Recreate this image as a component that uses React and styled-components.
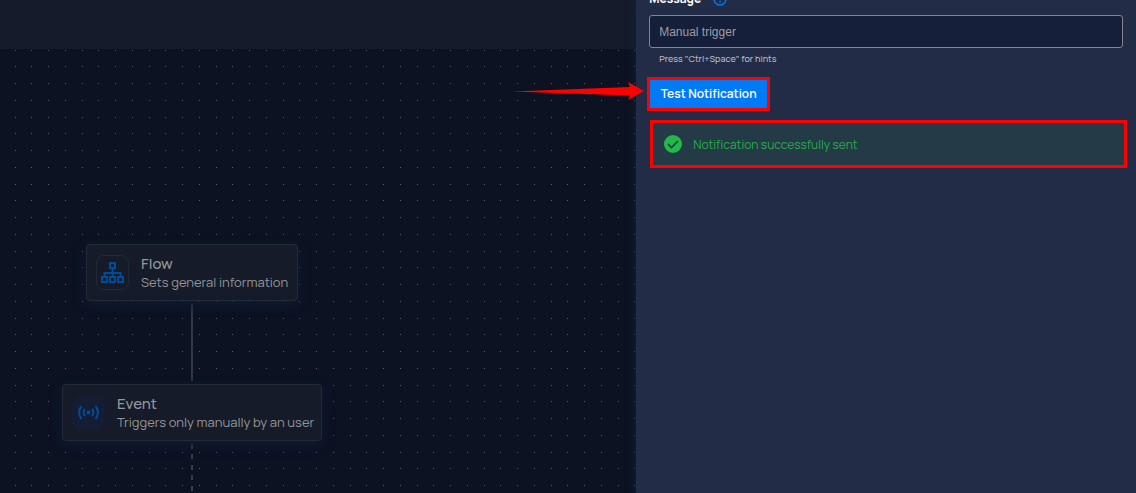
import React from 'react';
import styled, { createGlobalStyle } from 'styled-components';

const Global = createGlobalStyle`
  * { box-sizing: border-box; }
  body { margin: 0; background: #0c1222; font-family: Manrope, Inter, "Liberation Sans", sans-serif; }
`;

const Screen = styled.div`
  display: grid;
  grid-template-columns: minmax(0, 1fr) 44%;
  min-height: 100vh;
  overflow: hidden;
`;

const Workspace = styled.main`
  display: flex;
  flex-direction: column;
  min-width: 0;
`;

const TopBar = styled.header`
  height: 49px;
  background: #151b2a;
`;

const Canvas = styled.section`
  position: relative;
  flex: 1;
  overflow: hidden;
`;

const Layer = styled.svg`
  position: absolute;
  inset: 0;
  width: 100%;
  height: 100%;
`;

const Node = styled.article`
  position: absolute;
  left: ${(p) => p.$x}px;
  top: ${(p) => p.$y}px;
  width: ${(p) => p.$width}px;
  height: 57px;
  padding: 0 9px;
  display: flex;
  align-items: center;
  gap: 12px;
  background: #151b29;
  border: 1px solid #242a38;
  border-radius: 4px;
  box-shadow: 0 4px 12px #0e1c34;
`;

const NodeIcon = styled.span`
  flex: none;
  display: grid;
  place-items: center;
  width: 33px;
  height: 35px;
  border: 1px solid ${(p) => (p.$outlined ? '#232938' : '#141d33')};
  border-radius: 8px;
  background: ${(p) => (p.$outlined ? 'transparent' : '#141d33')};
  color: #024b98;
`;

const NodeText = styled.div`
  color: #949698;
  white-space: nowrap;
`;

const NodeTitle = styled.h2`
  margin: 0;
  font-size: 15px;
  line-height: 20px;
  font-weight: 500;
`;

const NodeSummary = styled.p`
  margin: 0;
  font-size: 13px;
  line-height: 17px;
`;

const Panel = styled.aside`
  position: relative;
  padding: 0 13px;
  background: #232c47;
  box-shadow: 0 0 8px #14233d;
`;

const Form = styled.form`
  display: flex;
  flex-direction: column;
  align-items: flex-start;
  margin-top: -10px;
`;

const LabelRow = styled.div`
  display: flex;
  align-items: center;
  gap: 12px;
  height: 18px;
  margin-bottom: 7px;
`;

const Label = styled.label`
  color: #fff;
  font-size: 12px;
  line-height: 18px;
  font-weight: 700;
`;

const HelpButton = styled.button`
  display: grid;
  padding: 0;
  border: 0;
  background: none;
  color: #007bf5;
`;

const TextInput = styled.input`
  width: 100%;
  height: 33px;
  padding: 0 9px;
  border: 1px solid #85868c;
  border-radius: 3px;
  background: #161f3a;
  color: #9b9da3;
  font: 12px "Liberation Sans", Arial, sans-serif;
  outline: 0;
`;

const Hint = styled.small`
  margin: 4px 0 0 10px;
  color: #b6b9c1;
  font-size: 9px;
  font-weight: 500;
  line-height: 14px;
`;

const Marked = styled.div`
  position: relative;
  width: ${(p) => (p.$wide ? 'calc(100% + 3px)' : '123px')};
  margin: ${(p) => (p.$wide ? '9px 0 0 1px' : '11px 0 0 -2px')};
  border: 3px solid #f00;
`;

const TestButton = styled.button`
  display: block;
  width: 100%;
  height: 28px;
  padding: 0;
  border: 0;
  background: #007bf5;
  color: #fff;
  font: 600 12px/28px Manrope, Inter, sans-serif;
  white-space: nowrap;
`;

const Alert = styled.div`
  display: flex;
  align-items: center;
  gap: 11px;
  height: 42px;
  padding: 0 11px;
  background: #243a47;
  color: #23ae48;
  font-size: 12px;
`;

const Arrow = styled.svg`
  position: absolute;
  right: calc(100% + 6px);
  top: 0;
  width: 132px;
  height: 22px;
`;

const dots = [16, 32, 49, 66];

function FlowIcon() {
  return (
    <svg width="23" height="21" viewBox="0 0 23 21" fill="none" stroke="currentColor" strokeWidth="2" aria-hidden="true">
      <path d="M9 1h5v5H9zM1 15h5v5H1zM9 15h5v5H9zM17 15h5v5h-5zM11.5 6v9M3.5 15v-4h16v4" />
    </svg>
  );
}

function SignalIcon() {
  return (
    <svg width="21" height="15" viewBox="0 0 21 15" fill="none" stroke="currentColor" strokeWidth="2" aria-hidden="true">
      <circle cx="10.5" cy="7.5" r="2" fill="currentColor" stroke="none" />
      <path d="M7 4a5.5 5.5 0 0 0 0 7M14 4a5.5 5.5 0 0 1 0 7M3.5 1a10 10 0 0 0 0 13M17.5 1a10 10 0 0 1 0 13" />
    </svg>
  );
}

export default function App() {
  return (
    <>
      <Global />
      <Screen>
        <Workspace>
          <TopBar />
          <Canvas aria-label="Flow editor">
            <Layer aria-hidden="true">
              <defs>
                <pattern id="dots" width="67" height="67" patternUnits="userSpaceOnUse">
                  {dots.map((y) => dots.map((x) => (
                    <rect key={`${x}-${y}`} x={x - 1} y={(y + 52) % 67} width="1" height="1" fill="#5b5f6c" />
                  )))}
                </pattern>
              </defs>
              <rect width="100%" height="100%" fill="url(#dots)" />
              <path d="M192 255v77" stroke="#333744" strokeWidth="2" />
              <path d="M192 395v60" stroke="#3a3e4b" strokeWidth="2" strokeDasharray="5 5 5 6" />
            </Layer>
            <Node $x={86} $y={195} $width={212}>
              <NodeIcon $outlined><FlowIcon /></NodeIcon>
              <NodeText>
                <NodeTitle>Flow</NodeTitle>
                <NodeSummary>Sets general information</NodeSummary>
              </NodeText>
            </Node>
            <Node $x={62} $y={335} $width={260}>
              <NodeIcon><SignalIcon /></NodeIcon>
              <NodeText>
                <NodeTitle>Event</NodeTitle>
                <NodeSummary>Triggers only manually by an user</NodeSummary>
              </NodeText>
            </Node>
          </Canvas>
        </Workspace>
        <Panel>
          <Form onSubmit={(e) => e.preventDefault()}>
            <LabelRow>
              <Label htmlFor="message">Message</Label>
              <HelpButton type="button" aria-label="Help">
                <svg width="14" height="14" viewBox="0 0 14 14" fill="none" stroke="currentColor" strokeWidth="1.3">
                  <circle cx="7" cy="7" r="6" />
                  <path d="M5 5.5q0-2 2-2t2 2q0 1-2 2v1M7 9.5v1.2" />
                </svg>
              </HelpButton>
            </LabelRow>
            <TextInput id="message" defaultValue="Manual trigger" />
            <Hint>Press "Ctrl+Space" for hints</Hint>
            <Marked>
              <TestButton type="button">Test Notification</TestButton>
              <Arrow viewBox="0 0 132 22" fill="#f00" aria-hidden="true">
                <path d="M0 11.500 118 7l-2-5 16 9-16 9 2-4.500z" />
              </Arrow>
            </Marked>
            <Marked $wide>
              <Alert role="status">
                <svg width="18" height="18" viewBox="0 0 18 18" aria-hidden="true">
                  <circle cx="9" cy="9" r="9" fill="#22b84a" />
                  <path d="m4 9 3.5 3.5L14 6" fill="none" stroke="#243a47" strokeWidth="1.7" />
                </svg>
                Notification successfully sent
              </Alert>
            </Marked>
          </Form>
        </Panel>
      </Screen>
    </>
  );
}
